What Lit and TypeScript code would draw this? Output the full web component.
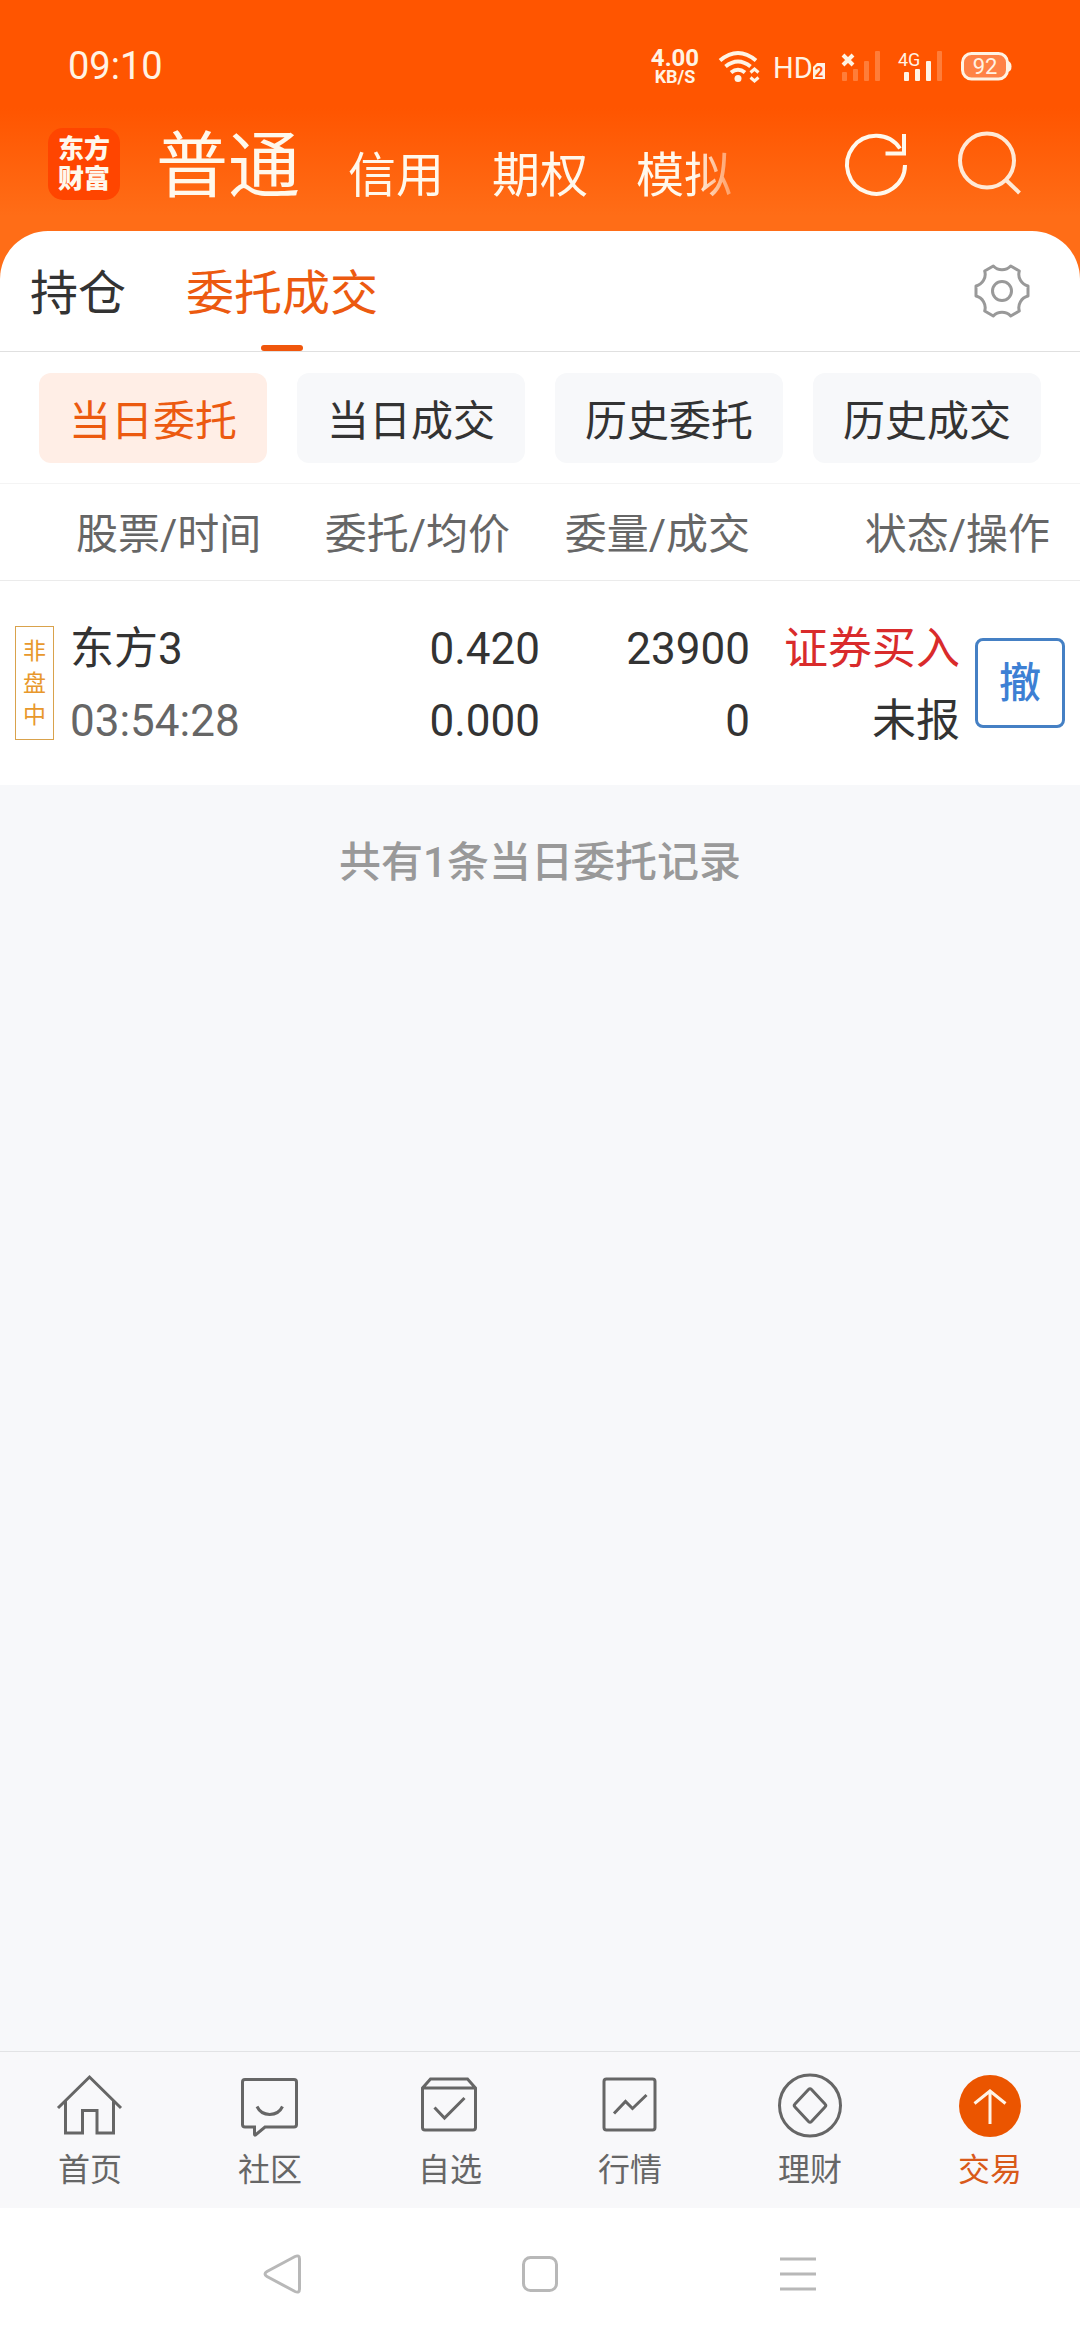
import { LitElement, html, css, svg, TemplateResult } from "lit";
import { customElement, state } from "lit/decorators.js";
import { classMap } from "lit/directives/class-map.js";

interface Order {
  session: string;
  name: string;
  time: string;
  price: string;
  average: string;
  quantity: string;
  filled: string;
  side: string;
  status: string;
}

const orders: Order[] = [
  {
    session: "非盘中",
    name: "东方3",
    time: "03:54:28",
    price: "0.420",
    average: "0.000",
    quantity: "23900",
    filled: "0",
    side: "证券买入",
    status: "未报",
  },
];

const tabIcons: Record<string, TemplateResult> = {
  首页: svg`<path d="M4 38 35.5 7 67 38M11.5 31V63H28.5V40.5H43V63H59.5V31"/>`,
  社区: svg`<path d="M11 9.5H60Q62.5 9.5 62.5 12V54.5Q62.5 57 60 57H31L21.5 65Q20.5 65.500 20.500 64V57H11Q8.500 57 8.500 54.500V12Q8.500 9.500 11 9.500Z"/><path d="M23 36.500C28 47 43.500 47 48.500 36.500"/>`,
  自选: svg`<path d="M8.500 18 16.500 9H53.500L61.500 18V57.500Q61.500 60 59 60H11Q8.500 60 8.500 57.500ZM8.500 18H61.500"/><path d="M20.500 37.500 30.500 48 50.500 28"/>`,
  行情: svg`<rect x="10" y="9" width="51" height="51" rx="2.500"/><path d="M20 43.500 31.500 31.500 38.500 38.500 52.500 25"/>`,
  理财: svg`<circle cx="36" cy="35.500" r="30.500"/><path d="M34.500 19.500Q36 18 37.500 19.500L51 34Q52.500 35.500 51 37L37.500 51.500Q36 53 34.500 51.500L21 37Q19.500 35.500 21 34Z"/>`,
  交易: svg`<circle cx="36" cy="36" r="31" fill="#eb5500" stroke="none"/><path d="M36 54V21M20.500 33.500 36 21 51.500 33.500" stroke="#fff3e6"/>`,
};

@customElement("status-bar")
export class StatusBar extends LitElement {
  static styles = css`
    :host {
      display: flex;
      align-items: center;
      height: 60px;
      padding: 36px 68px 0;
      color: #fff3e4;
    }
    .time {
      flex: 1;
      font-size: 38px;
      line-height: 60px;
    }
    .speed {
      display: flex;
      flex-direction: column;
      align-items: center;
      width: 48px;
      margin-right: 15px;
      padding-top: 2px;
      font-weight: 700;
      font-size: 24px;
      line-height: 20px;
    }
    .unit {
      font-size: 18px;
      line-height: 18px;
    }
    .icons {
      display: block;
      width: 298px;
      height: 60px;
    }
  `;

  render() {
    return html`
      <span class="time">09:10</span>
      <span class="speed"><span>4.00</span><span class="unit">KB/S</span></span>
      <svg class="icons" viewBox="714 36 298 60" fill="#fff3e4" aria-hidden="true">
        <g fill="none" stroke="#fff3e4" stroke-width="4">
          <path d="M720 60.500Q738 45.500 756 60.500M725.500 66.500Q738 56.500 750.500 66.500M731 72.500Q738 67 745 72.500" />
          <path d="M750.500 72.500 754.500 69 758.500 72.500M750.500 77.500 754.500 81 758.500 77.500" stroke-width="3" />
        </g>
        <circle cx="738" cy="78.500" r="3.500" />
        <text x="773" y="78" font-size="29">HD</text>
        <path d="M817 63H825V79H813V67Z" />
        <text x="819" y="77" font-size="15" font-weight="700" fill="#ff5500" text-anchor="middle">2</text>
        <path d="M843 55 853 65M853 55 843 65" stroke="#fff3e4" stroke-width="4" />
        <g opacity="0.25">
          <rect x="842" y="72" width="5" height="9" rx="1" />
          <rect x="853" y="69" width="5" height="12" rx="1" />
          <rect x="864" y="61" width="5" height="20" rx="1" />
          <rect x="875" y="51" width="5" height="30" rx="1" />
          <rect x="937" y="51" width="5" height="30" rx="1" />
        </g>
        <text x="898" y="66" font-size="18">4G</text>
        <rect x="904" y="72" width="5" height="9" rx="1" />
        <rect x="915" y="69" width="5" height="12" rx="1" />
        <rect x="926" y="61" width="5" height="20" rx="1" />
        <rect x="962.500" y="53.500" width="45" height="25.500" rx="9" fill="#ff8246" stroke="#fff3e4" stroke-width="3" />
        <path d="M1008 61Q1011.500 62 1011.500 66.500Q1011.500 71 1008 72Z" />
        <text x="985" y="74" font-size="22" text-anchor="middle">92</text>
      </svg>
    `;
  }
}

@customElement("app-root")
export class AppRoot extends LitElement {
  @state() private account = "普通";
  @state() private section = "委托成交";
  @state() private filter = "当日委托";
  @state() private tab = "交易";

  static styles = css`
    :host {
      display: flex;
      flex-direction: column;
      min-height: 100vh;
      background: #f7f8fa;
      color: #333;
      font-family: Roboto, "Noto Sans CJK SC", sans-serif;
    }
    button {
      padding: 0;
      border: 0;
      background: none;
      color: inherit;
      font: inherit;
      white-space: nowrap;
      cursor: pointer;
    }
    svg {
      display: block;
    }
    .top {
      background: linear-gradient(#ff5500 108px, #ff6d17 216px);
    }
    .header {
      display: flex;
      align-items: center;
      height: 135px;
      padding: 0 54px 0 48px;
      color: #fff8ec;
    }
    .logo {
      display: grid;
      place-content: center;
      width: 72px;
      height: 72px;
      margin-right: 36px;
      border-radius: 15px;
      background: #ff4500;
      font-size: 26px;
      font-weight: 900;
      line-height: 30px;
      text-align: center;
    }
    .accounts {
      display: flex;
      flex: 1;
      align-items: flex-end;
      gap: 48px;
      min-width: 0;
      margin-right: 86px;
      padding-top: 6px;
      overflow: hidden;
      font-size: 48px;
      line-height: 78px;
      mask-image: linear-gradient(to right, #000 calc(100% - 60px), transparent);
    }
    .account.active {
      font-size: 72px;
      line-height: 96px;
    }
    .actions {
      display: flex;
      gap: 42px;
    }
    .sections {
      display: flex;
      align-items: center;
      gap: 60px;
      height: 120px;
      padding: 0 42px 0 30px;
      border-bottom: 1px solid #e0e0e0;
      border-radius: 48px 48px 0 0;
      background: #fff;
      font-size: 48px;
    }
    .section {
      position: relative;
      padding-top: 6px;
      line-height: 114px;
    }
    .section.active {
      color: #ec5a10;
    }
    .section.active::after {
      content: "";
      position: absolute;
      bottom: 0;
      left: calc(50% - 21px);
      width: 42px;
      height: 6px;
      border-radius: 3px;
      background: #f0560c;
    }
    .settings {
      margin-left: auto;
    }
    .filters {
      display: grid;
      grid-template-columns: repeat(4, 1fr);
      gap: 30px;
      padding: 21px 39px 20px;
      border-bottom: 1px solid #f4f4f4;
      background: #fff;
      font-size: 42px;
    }
    .filter {
      height: 90px;
      padding-bottom: 2px;
      border-radius: 12px;
      background: #f7f8fa;
    }
    .filter.active {
      background: #ffeee6;
      color: #ec5a10;
    }
    .orders {
      width: 100%;
      border-spacing: 0;
      table-layout: fixed;
      background: #fff;
      font-size: 44px;
      line-height: 72px;
      text-align: right;
    }
    .col-tag {
      width: 70px;
    }
    .col-price {
      width: 240px;
    }
    .col-amount {
      width: 210px;
    }
    .col-action {
      width: 120px;
    }
    th {
      height: 90px;
      padding: 6px 30px 0 0;
      border-bottom: 1px solid #ebebeb;
      color: #666;
      font-size: 42px;
      font-weight: 400;
      white-space: nowrap;
    }
    th:first-child {
      padding: 6px 0 0 76px;
      text-align: left;
    }
    th:nth-child(3) {
      padding-right: 0;
    }
    td {
      padding: 32px 0 28px;
      white-space: nowrap;
    }
    .side {
      padding: 30px 0;
    }
    .name {
      text-align: left;
    }
    .line {
      display: block;
    }
    .muted {
      color: #666;
    }
    .buy {
      color: #d92b2b;
    }
    .tag {
      display: grid;
      place-content: center;
      width: 37px;
      height: 112px;
      margin-left: 15px;
      border: 1px solid #d9a24c;
      color: #e8982c;
      font-size: 23px;
      line-height: 32px;
      white-space: normal;
      text-align: center;
      word-break: break-all;
    }
    .tag-text {
      width: 24px;
      padding-top: 2px;
    }
    .cancel {
      display: block;
      width: 90px;
      height: 90px;
      margin-left: 15px;
      padding-top: 2px;
      border: 3px solid #4580c4;
      border-radius: 8px;
      color: #3d80d4;
      font-size: 42px;
      font-weight: 500;
      line-height: 82px;
    }
    .summary {
      flex: 1;
      margin: 0;
      padding-top: 46px;
      color: #999;
      font-size: 42px;
      font-weight: 500;
      line-height: 64px;
      text-align: center;
    }
    .tabs {
      display: grid;
      grid-template-columns: repeat(6, 1fr);
      border-top: 1px solid #e2e3e5;
      background: #f8f8fa;
    }
    .tab {
      display: flex;
      flex-direction: column;
      align-items: center;
      gap: 8px;
      padding: 18px 0;
      color: #666;
      font-size: 32px;
      line-height: 40px;
      text-decoration: none;
    }
    .tab.active {
      color: #d95a1a;
    }
    .system {
      display: flex;
      justify-content: center;
      align-items: center;
      gap: 186px;
      height: 132px;
      background: #fff;
    }
  `;

  private icon(body: TemplateResult, stroke = "#666", width = 3) {
    return html`<svg
      width="72"
      height="72"
      viewBox="0 0 72 72"
      fill="none"
      stroke=${stroke}
      stroke-width=${width}
      aria-hidden="true"
    >
      ${body}
    </svg>`;
  }

  private choices(names: string[], kind: string, current: string, pick: (n: string) => void) {
    return names.map(
      (name) => html`<button
        class=${classMap({ [kind]: true, active: name === current })}
        aria-pressed=${name === current}
        @click=${() => pick(name)}
      >
        ${name}
      </button>`
    );
  }

  render() {
    return html`
      <div class="top">
        <status-bar></status-bar>
        <header class="header">
          <div class="logo"><span>东方</span><span>财富</span></div>
          <nav class="accounts">
            ${this.choices(["普通", "信用", "期权", "模拟"], "account", this.account, (n) => (this.account = n))}
          </nav>
          <div class="actions">
            <button aria-label="刷新">
              ${this.icon(
                svg`<path d="M65 37A29 29 0 1 1 60 20.500"/><path d="M64 6V25.500H45.500"/>`,
                "#fff8ec",
                4
              )}
            </button>
            <button aria-label="搜索">
              ${this.icon(svg`<circle cx="33" cy="32.500" r="27"/><path d="M52 52 65.500 65"/>`, "#ffe9d6", 4)}
            </button>
          </div>
        </header>
        <div class="sections">
          ${this.choices(["持仓", "委托成交"], "section", this.section, (n) => (this.section = n))}
          <button class="settings" aria-label="设置">
            ${this.icon(
              svg`<g transform="translate(36 36)" stroke-linejoin="round"><path d="M26 -5V5A12 12 0 0 0 17.300 20L8.700 25A12 12 0 0 0 -8.700 25L-17.300 20A12 12 0 0 0 -26 5V-5A12 12 0 0 0 -17.300 -20L-8.700 -25A12 12 0 0 0 8.700 -25L17.300 -20A12 12 0 0 0 26 -5Z"/><circle r="9.500"/></g>`,
              "#999"
            )}
          </button>
        </div>
      </div>
      <div class="filters">
        ${this.choices(
          ["当日委托", "当日成交", "历史委托", "历史成交"],
          "filter",
          this.filter,
          (n) => (this.filter = n)
        )}
      </div>
      <table class="orders">
        <colgroup>
          <col class="col-tag" />
          <col />
          <col class="col-price" />
          <col class="col-amount" />
          <col class="col-amount" />
          <col class="col-action" />
        </colgroup>
        <thead>
          <tr>
            <th colspan="2">股票/时间</th>
            <th>委托/均价</th>
            <th>委量/成交</th>
            <th colspan="2">状态/操作</th>
          </tr>
        </thead>
        <tbody>
          ${orders.map(
            (o) => html`<tr>
              <td class="side"><div class="tag"><span class="tag-text">${o.session}</span></div></td>
              <td class="name"><span class="line">${o.name}</span><span class="line muted">${o.time}</span></td>
              <td><span class="line">${o.price}</span><span class="line">${o.average}</span></td>
              <td><span class="line">${o.quantity}</span><span class="line">${o.filled}</span></td>
              <td><span class="line buy">${o.side}</span><span class="line">${o.status}</span></td>
              <td class="side"><button class="cancel">撤</button></td>
            </tr>`
          )}
        </tbody>
      </table>
      <p class="summary">共有${orders.length}条当日委托记录</p>
      <nav class="tabs">
        ${Object.keys(tabIcons).map(
          (name) => html`<a
            class=${classMap({ tab: true, active: name === this.tab })}
            href="#"
            @click=${(e: Event) => {
              e.preventDefault();
              this.tab = name;
            }}
            >${this.icon(tabIcons[name])}<span>${name}</span></a
          >`
        )}
      </nav>
      <div class="system">
        <button aria-label="返回">
          ${this.icon(
            svg`<path d="M49 18.500Q53.500 16.500 53.500 21V51Q53.500 55.500 49 53.500L21 38.500Q17 36 21 33.500Z"/>`,
            "#b8b8b8"
          )}
        </button>
        <button aria-label="主页">
          ${this.icon(svg`<rect x="19.500" y="19.500" width="33" height="33" rx="7"/>`, "#b8b8b8")}
        </button>
        <button aria-label="最近任务">
          ${this.icon(svg`<path d="M18 21H54M18 36H54M18 51H54"/>`, "#b8b8b8")}
        </button>
      </div>
    `;
  }
}
